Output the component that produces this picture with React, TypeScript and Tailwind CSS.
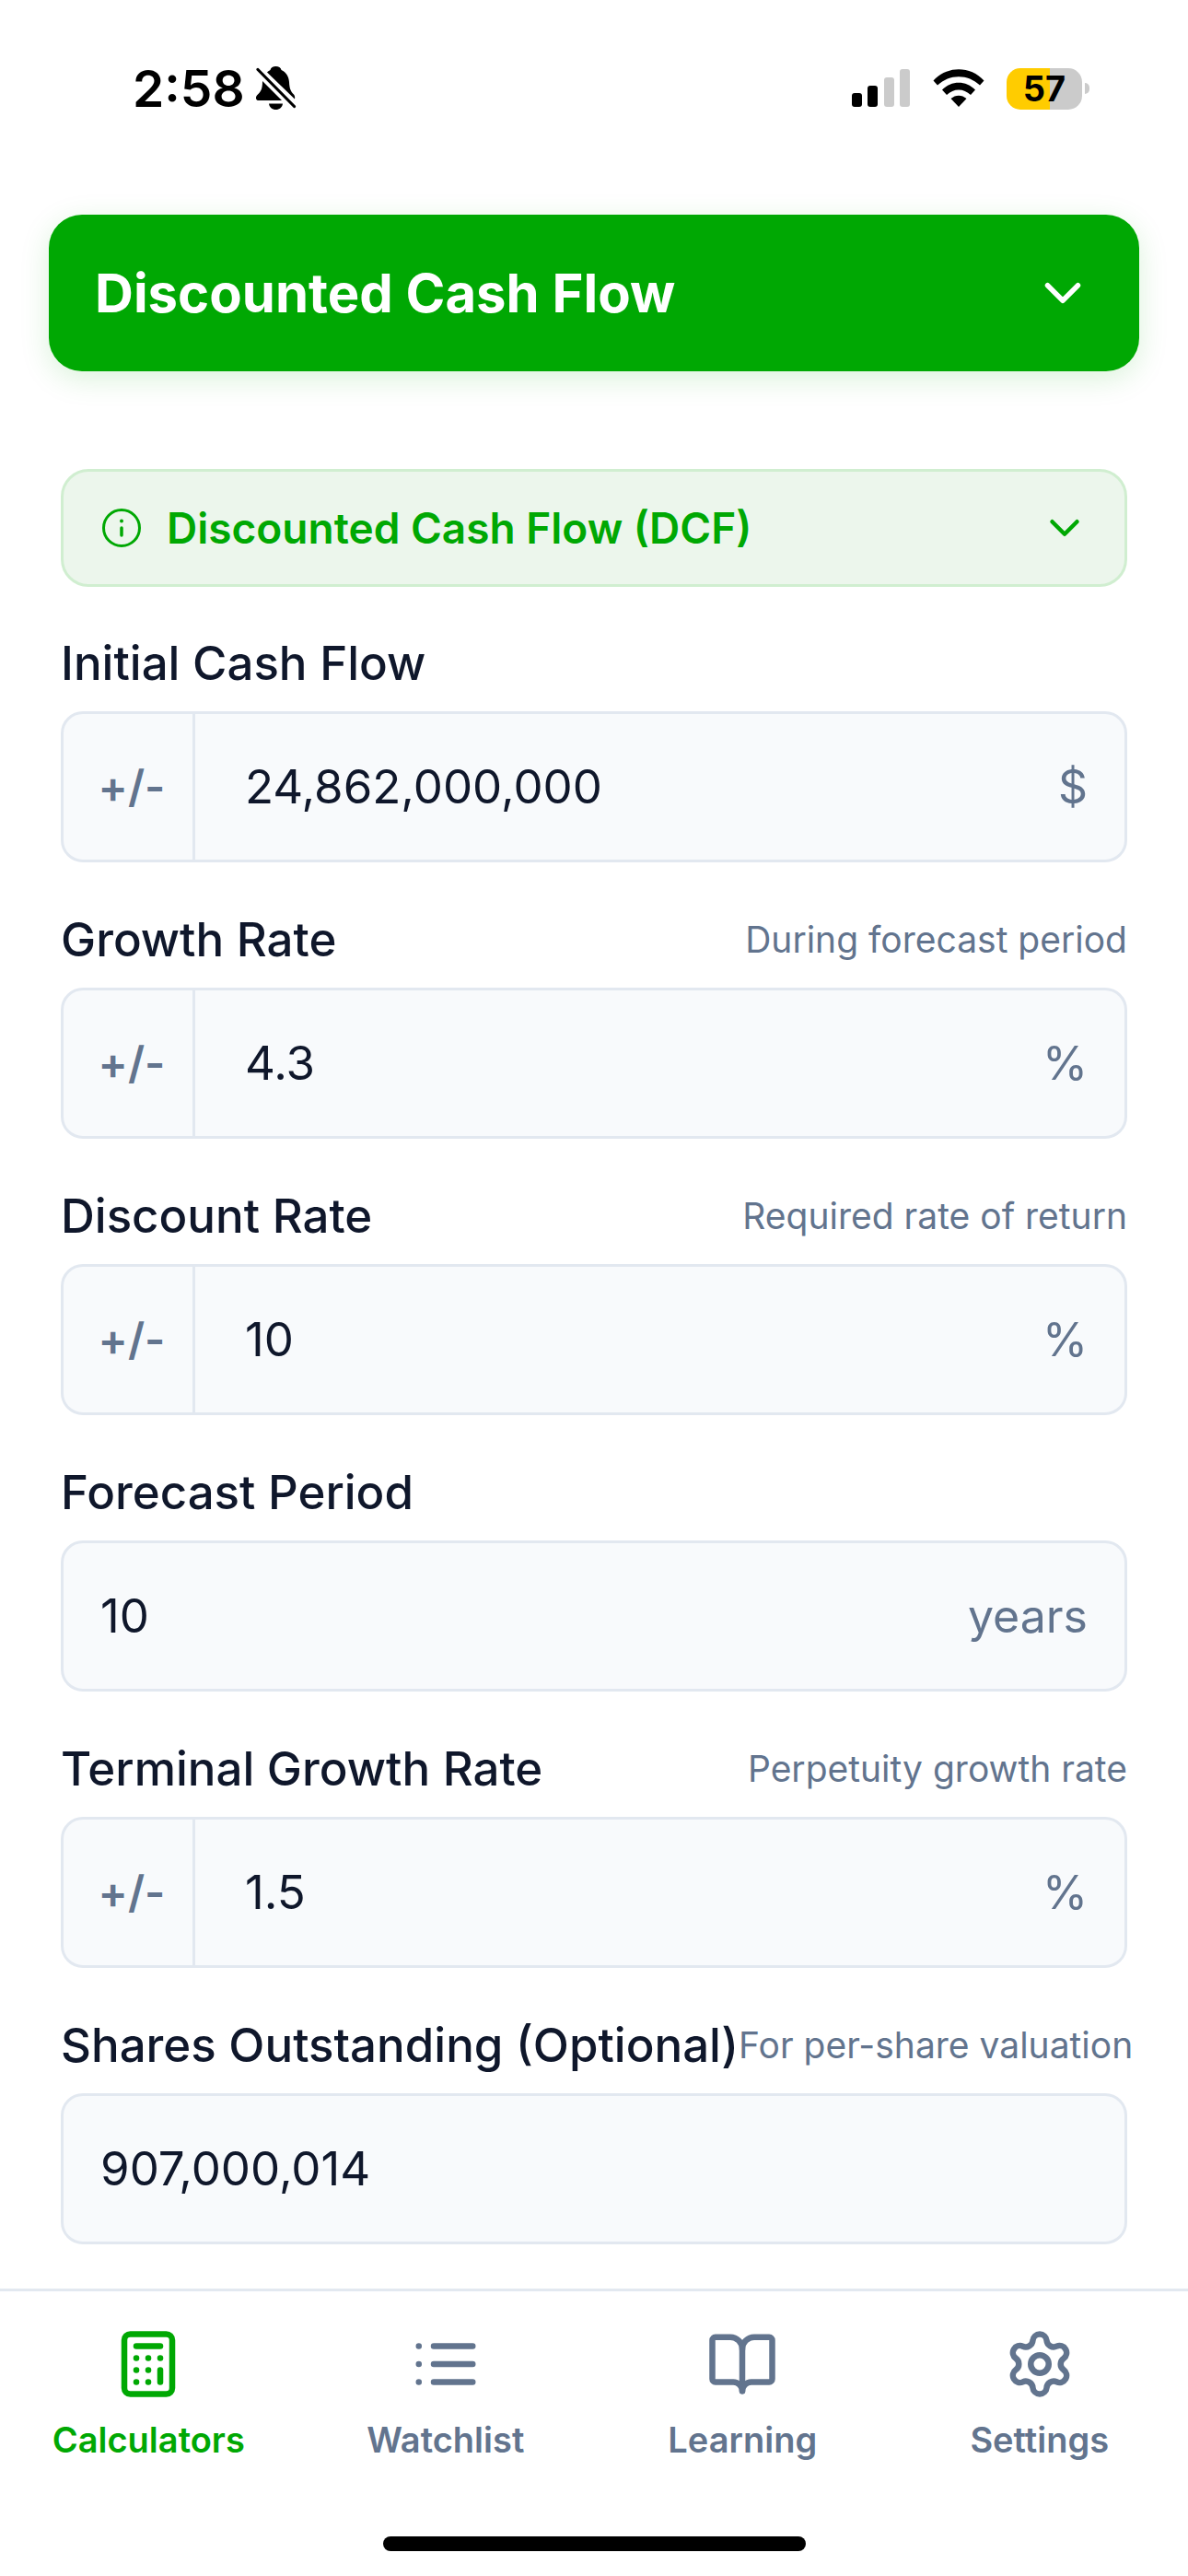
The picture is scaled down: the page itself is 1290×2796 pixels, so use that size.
import { useState } from "react";
import { BookOpen, Calculator, ChevronDown, Settings } from "lucide-react";

type FieldSpec = {
  id: string;
  label: string;
  hint?: string;
  value: string;
  unit?: string;
  signed?: boolean;
};

const fields: FieldSpec[] = [
  { id: "cash-flow", label: "Initial Cash Flow", value: "24,862,000,000", unit: "$", signed: true },
  { id: "growth", label: "Growth Rate", hint: "During forecast period", value: "4.3", unit: "%", signed: true },
  { id: "discount", label: "Discount Rate", hint: "Required rate of return", value: "10", unit: "%", signed: true },
  { id: "period", label: "Forecast Period", value: "10", unit: "years" },
  { id: "terminal", label: "Terminal Growth Rate", hint: "Perpetuity growth rate", value: "1.5", unit: "%", signed: true },
  { id: "shares", label: "Shares Outstanding (Optional)", hint: "For per-share valuation", value: "907,000,014" },
];

function BellOff() {
  return (
    <svg className="h-12 w-11" viewBox="0 0 44 48" aria-label="Silent mode">
      <path d="M12 6.5C13.500 5 14.500 4.500 15.500 4C16 1.500 18.500 0 21.500 0S27 1.500 27.500 4C33 6.500 35.500 11 36 17C36.300 24 37.500 27 41 30.500C42 31.700 42.500 33.500 42 35.500Z" />
      <path d="M7 16L28 37H3C-.5 37-.8 33.500 1 31.500C5 27.500 7 25.500 7 16Z" />
      <path d="M14 40.500H29C28.500 44.500 25.500 47 21.500 47S14.500 44.500 14 40.500Z" />
      <path d="M2 3.500L41.500 43.500" stroke="black" strokeWidth="3.200" strokeLinecap="round" />
    </svg>
  );
}

function Signal() {
  return (
    <svg className="h-[42px] w-16" viewBox="0 0 64 42" aria-label="Signal">
      <rect x="0" y="26" width="11" height="15" rx="3" />
      <rect x="17" y="18" width="11" height="23" rx="3" />
      <rect x="35" y="9" width="11" height="32" rx="3" fill="#cbcbcb" />
      <rect x="52" y="0" width="11" height="41" rx="3" fill="#cbcbcb" />
    </svg>
  );
}

function Wifi() {
  return (
    <svg className="h-[42px] w-14" viewBox="0 0 56 42" aria-label="Wi-Fi">
      <path d="M0.500 12.500C15-4 41-4 55.500 12.500L51 17.500C38 5 18 5 5 17.500Z" />
      <path d="M10 22.500C20 12 36 12 46 22.500L41 28C33.500 20.500 22.500 20.500 15 28Z" />
      <path d="M19.500 32C24.500 27.500 31.500 27.500 36.500 32L28 41Z" />
    </svg>
  );
}

function StatusBar() {
  return (
    <div className="flex h-[233px] items-start justify-between pt-[66px] pr-[107px] pl-[144px]">
      <div className="flex h-[60px] items-center gap-3">
        <span className="text-[55px] leading-[60px] font-semibold">2:58</span>
        <BellOff />
      </div>
      <div className="flex h-[60px] items-center">
        <Signal />
        <span className="ml-6 flex">
          <Wifi />
        </span>
        <div className="ml-6 flex h-[45px] w-[82px] items-center justify-center rounded-[15px] bg-linear-to-r from-[#ffcc00] from-57% to-[#cbcbcb] to-57%">
          <span className="text-[38px] leading-[45px] font-bold">57</span>
        </div>
        <span className="ml-[3px] h-3 w-[5px] rounded-r-full bg-[#cbcbcb]" />
      </div>
    </div>
  );
}

function InfoIcon() {
  return (
    <svg className="size-[42px]" viewBox="0 0 42 42" fill="none" stroke="currentColor" strokeWidth="3" strokeLinecap="round">
      <circle cx="21" cy="21" r="19.500" />
      <path d="M21 21V29" strokeWidth="3.500" />
      <circle cx="21" cy="13.500" r="2" fill="currentColor" stroke="none" />
    </svg>
  );
}

function ListIcon({ className }: { className?: string }) {
  return (
    <svg className={className} viewBox="0 0 24 24" fill="none" stroke="currentColor" strokeWidth="2" strokeLinecap="round">
      <path d="M8 6h13M8 12h13M8 18h13M3 6h.01M3 12h.01M3 18h.01" />
    </svg>
  );
}

function Field({ field }: { field: FieldSpec }) {
  const [value, setValue] = useState(field.value);
  const flip = () => setValue((v) => (v.startsWith("-") ? v.slice(1) : "-" + v));
  return (
    <div className="mb-[34px]">
      <div className="mb-0.5 flex h-[100px] items-center justify-between whitespace-nowrap">
        <label htmlFor={field.id} className="text-[51px] font-medium text-slate-900">
          {field.label}
        </label>
        {field.hint && <span className="text-[39px] text-slate-500">{field.hint}</span>}
      </div>
      <div className="flex h-[164px] items-stretch overflow-hidden rounded-3xl border-3 border-slate-200 bg-slate-50">
        {field.signed && (
          <button
            type="button"
            onClick={flip}
            aria-label={"Change sign of " + field.label}
            className="w-[143px] shrink-0 border-r-3 border-slate-200 pl-2 text-[48px] font-semibold text-slate-500"
          >
            +/-
          </button>
        )}
        <input
          id={field.id}
          value={value}
          inputMode="decimal"
          onChange={(e) => setValue(e.target.value)}
          className={
            "min-w-0 flex-1 bg-transparent text-[51px] text-slate-900 outline-none " +
            (field.signed ? "pl-[54px]" : "pl-10")
          }
        />
        {field.unit && (
          <span className="flex items-center pr-10 text-[50px] text-slate-500">{field.unit}</span>
        )}
      </div>
    </div>
  );
}

const tabs = [
  { label: "Calculators", icon: Calculator, active: true },
  { label: "Watchlist", icon: ListIcon, active: false },
  { label: "Learning", icon: BookOpen, active: false },
  { label: "Settings", icon: Settings, active: false },
];

export default function App() {
  return (
    <div className="flex min-h-screen flex-col overflow-x-hidden bg-white font-['Inter',sans-serif] text-black">
      <StatusBar />
      <main className="flex-1">
        <div className="px-[53px]">
          <button
            type="button"
            className="flex h-[170px] w-full items-center justify-between rounded-[36px] bg-[#00a803] px-[50px] text-white shadow-[0_8px_32px_rgba(0,168,3,0.15)]"
          >
            <span className="text-[58px] font-bold">Discounted Cash Flow</span>
            <ChevronDown className="size-[66px]" strokeWidth={2} />
          </button>
        </div>
        <div className="px-[66px] pt-[106px]">
          <button
            type="button"
            className="mb-[33px] flex h-[128px] w-full items-center rounded-[30px] border-3 border-[#d0eed0] bg-[#ecf6ec] pr-[38px] pl-[42px] text-[#00a803]"
          >
            <InfoIcon />
            <span className="ml-7 text-[46px] font-semibold">Discounted Cash Flow (DCF)</span>
            <ChevronDown className="ml-auto size-[54px]" strokeWidth={2} />
          </button>
          {fields.map((f) => (
            <Field key={f.id} field={f} />
          ))}
        </div>
      </main>
      <nav className="border-t-3 border-slate-200 bg-white">
        <div className="grid grid-cols-4 pt-10">
          {tabs.map(({ label, icon: Icon, active }) => (
            <a
              key={label}
              href="#"
              aria-current={active ? "page" : undefined}
              className={"flex flex-col items-center gap-4 " + (active ? "text-[#00a803]" : "text-slate-500")}
            >
              <Icon className="size-[78px]" />
              <span className="text-[38px] leading-[54px] font-semibold">{label}</span>
            </a>
          ))}
        </div>
        <div className="flex justify-center pt-[78px] pb-[27px]">
          <div className="h-4 w-[459px] rounded-full bg-black" />
        </div>
      </nav>
    </div>
  );
}
